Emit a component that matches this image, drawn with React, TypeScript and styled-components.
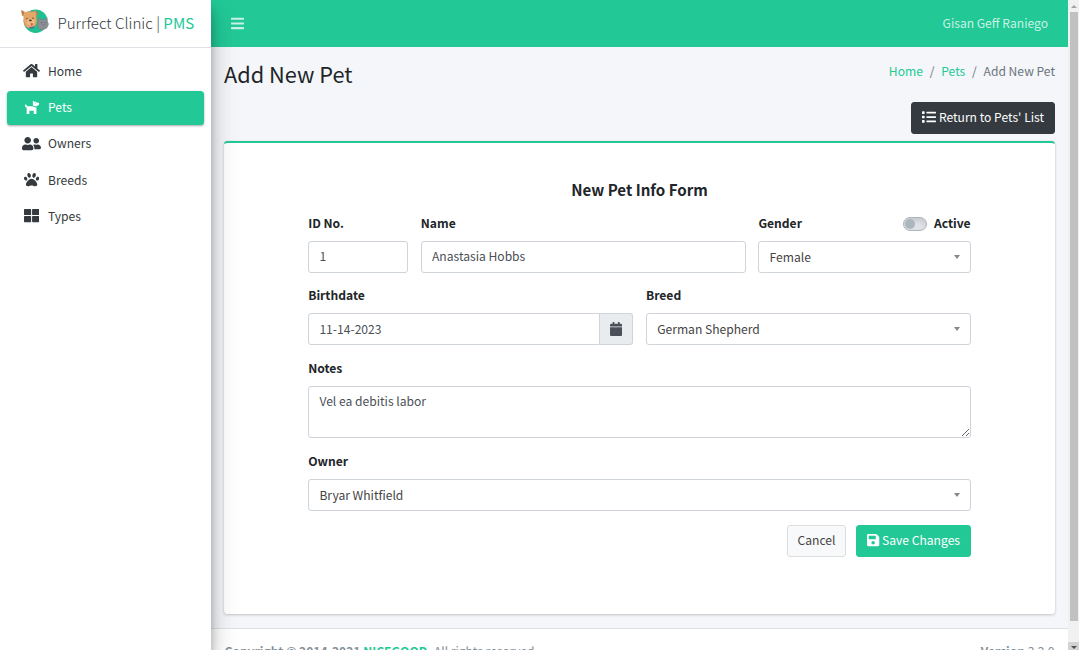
import React from "react";
import styled, { createGlobalStyle, css } from "styled-components";
import {
  FaBars, FaCalendar, FaDog, FaHome, FaList, FaPaw, FaSave, FaThLarge, FaUserFriends,
} from "react-icons/fa";

const GREEN = "#22c997";

const GlobalStyle = createGlobalStyle`
  *, *::before, *::after { box-sizing: border-box; }
  html, body { margin: 0; height: 650px; overflow: hidden; }
  body, input, textarea, button {
    font-family: "Noto Sans CJK SC", "Noto Sans", sans-serif;
    font-size: 12.1px;
    line-height: 20px;
    color: #212529;
  }
`;

const Page = styled.div`
  display: flex;
  height: 650px;
  overflow: hidden;
  background: #f4f6f9;
`;

const Sidebar = styled.aside`
  position: relative;
  z-index: 2;
  flex: none;
  width: 211px;
  background: #fff;
  box-shadow: 0 12.6px 25.2px rgba(0, 0, 0, 0.25), 0 9px 9px rgba(0, 0, 0, 0.22);
`;

const Brand = styled.div`
  display: flex;
  align-items: center;
  height: 48px;
  padding: 0 0 3px 20px;
  border-bottom: 1px solid #dee2e6;
`;

const BrandName = styled.span`
  margin-left: 7.4px;
  font-size: 15.15px;
  font-weight: 300;
  color: #343a40;
  white-space: pre;
`;

const Accent = styled.span`
  color: ${GREEN};
`;

const BrandAccent = styled(Accent)`
  font-weight: 400;
`;

const Icon = styled.span<{ $width: number; $height: number }>`
  flex: none;
  display: flex;
  svg {
    flex: none;
    width: ${(p) => p.$width}px;
    height: ${(p) => p.$height}px;
  }
`;

const Menu = styled.nav`
  display: flex;
  flex-direction: column;
  gap: 2.3px;
  padding: 6.4px 7px;
`;

const MenuItem = styled.a<{ $active?: boolean }>`
  display: flex;
  align-items: center;
  height: 34px;
  padding: 0 0 1px 13.6px;
  border-radius: 3.6px;
  color: #343a40;
  ${(p) =>
    p.$active &&
    css`
      background: ${GREEN};
      color: #fff;
      box-shadow: 0 1px 3px rgba(0, 0, 0, 0.12), 0 1px 2px rgba(0, 0, 0, 0.24);
    `}
`;

const MenuIcon = styled(Icon)`
  justify-content: center;
  width: 22px;
  margin-right: 5.4px;
`;

const Main = styled.div`
  flex: 1;
  min-width: 0;
  display: flex;
  flex-direction: column;
`;

const Navbar = styled.header`
  flex: none;
  display: flex;
  align-items: center;
  justify-content: space-between;
  height: 47px;
  padding: 0 20px 1px 19.5px;
  background: ${GREEN};
  color: rgba(255, 255, 255, 0.75);
`;

const Content = styled.main`
  flex: none;
  height: 581px;
  padding: 12px 13px 0;
`;

const TitleBar = styled.div`
  display: flex;
  justify-content: space-between;
  height: 43px;
`;

const Title = styled.h1`
  margin: 0;
  font-size: 21.75px;
  font-weight: 400;
  line-height: 30px;
`;

const Breadcrumb = styled.div`
  display: flex;
  gap: 6.8px;
  padding-top: 2px;
  color: #6c757d;
`;

const Actions = styled.div`
  display: flex;
  justify-content: flex-end;
  gap: 10px;
`;

const tones = {
  dark: css`background: #343a40; border-color: #343a40; color: #fff;`,
  light: css`background: #f8f9fa; border-color: #ddd; color: #444;`,
  primary: css`background: ${GREEN}; border-color: ${GREEN}; color: #fff;`,
};

const Button = styled.button<{ $tone: keyof typeof tones; $gap?: number }>`
  display: flex;
  align-items: center;
  gap: ${(p) => p.$gap ?? 3}px;
  height: 32px;
  padding: 0 10px 2px;
  border: 1px solid;
  border-radius: 3px;
  white-space: nowrap;
  ${(p) => tones[p.$tone]}
`;

const Card = styled.section`
  height: 473px;
  margin-top: 7px;
  padding: 35px 84px 0;
  border-top: 2px solid ${GREEN};
  border-radius: 3.6px;
  background: #fff;
  box-shadow: 0 0 1px rgba(0, 0, 0, 0.125), 0 1px 3px rgba(0, 0, 0, 0.2);
`;

const FormTitle = styled.h2`
  margin: 0 0 13px;
  font-size: 15.1px;
  line-height: 22px;
  font-weight: 700;
  text-align: center;
`;

const Row = styled.div<{ $columns: string; $gap?: number }>`
  display: grid;
  grid-template-columns: ${(p) => p.$columns};
  column-gap: 12.6px;
  margin-bottom: ${(p) => p.$gap ?? 12}px;
`;

const Field = styled.div`
  min-width: 0;
`;

const LabelLine = styled.div`
  display: flex;
  justify-content: space-between;
  height: 20px;
  margin-bottom: 8px;
  padding: 0 0.4px 0 0.2px;
`;

const Label = styled.label`
  display: flex;
  align-items: center;
  gap: 7px;
  font-weight: 700;
`;

const controlBox = css`
  display: block;
  width: 100%;
  height: 32px;
  border: 1px solid #ced4da;
  border-radius: 3px;
  background: #fff;
  color: #495057;
`;

const Input = styled.input`
  ${controlBox}
  padding: 0 10.4px 3px;
  outline: none;
`;

const InputGroup = styled.div`
  display: flex;
  ${Input} {
    border-radius: 3px 0 0 3px;
    padding-bottom: 1px;
  }
`;

const Addon = styled.span`
  flex: none;
  display: flex;
  align-items: center;
  justify-content: center;
  width: 33px;
  border: 1px solid #ced4da;
  border-left: 0;
  border-radius: 0 3px 3px 0;
  background: #e9ecef;
  color: #495057;
`;

const TextArea = styled.textarea`
  ${controlBox}
  height: 52px;
  padding: 4px 10.4px;
  outline: none;
  resize: vertical;
`;

const SelectBox = styled.div`
  ${controlBox}
  display: flex;
  align-items: center;
  justify-content: space-between;
  padding: 0 10px 0 10.4px;
  color: #444;
  &::after {
    content: "";
    border: 3.5px solid transparent;
    border-top: 4.5px solid #888;
    border-bottom: 0;
  }
`;

const Toggle = styled.span`
  display: flex;
  align-items: center;
  width: 24px;
  height: 14px;
  margin-top: 1px;
  padding: 0 1px;
  border: 1px solid #adb5bd;
  border-radius: 7px;
  background: #dee2e6;
  box-shadow: inset 0 3px 4px rgba(0, 0, 0, 0.1);
  &::before {
    content: "";
    width: 10px;
    height: 10px;
    border-radius: 50%;
    background: #adb5bd;
  }
`;

const Footer = styled.footer`
  flex: none;
  display: flex;
  justify-content: space-between;
  padding: 12px 13.5px;
  border-top: 1px solid #dee2e6;
  background: #fff;
  color: #869099;
  font-size: 12.05px;
`;

const ScrollTrack = styled.div`
  flex: none;
  display: flex;
  flex-direction: column;
  align-items: center;
  width: 11px;
  height: 650px;
  background: #f1f1f1;
`;

const ScrollThumb = styled.div`
  flex: none;
  width: 8px;
  height: 609px;
  margin-bottom: auto;
  background: #c1c1c1;
`;

const ScrollButton = styled.div<{ $down?: boolean }>`
  flex: none;
  display: flex;
  align-items: center;
  justify-content: center;
  width: 11px;
  height: ${(p) => (p.$down ? 8 : 12)}px;
  padding-top: ${(p) => (p.$down ? 2 : 0)}px;
  background: ${(p) => (p.$down ? "#d2d2d2" : "#f1f1f1")};
  &::before {
    content: "";
    border: 3px solid transparent;
    ${(p) =>
      p.$down
        ? "border-top-color: #505050; border-bottom: 0;"
        : "border-bottom-color: #a3a3a3; border-top: 0;"}
  }
`;

const Logo = () => (
  <svg width="30" height="28" viewBox="0 0 30 28">
    <circle cx="15.6" cy="13.2" r="11.8" fill="#20bf91" />
    <path d="M18.2 13.6l.6-4 2.4 2 3.2-.2 2.7-1.9.3 4 1.2 2.6-1.6 3.8-3.4 1.5-3.8.1-2.3-3z" fill="#8b8f93" stroke="#6c7276" strokeWidth=".4" />
    <path d="M1.4 2.2l4.2 2.2 2.4-.8 4.4.1 3.6-.9 1.6 3-1.4 2.2.8 5.2-1.2 4-3.2 2.6-4.4.4-3.4-2.8-1.2-4.4.4-4.4-1.8-1z" fill="#e3a869" stroke="#b98450" strokeWidth=".4" />
    <path d="M1.5 2.5l2.6 1.6-.8 3.4-1.1-.6zM15.4 3.4l1.7-.2.6 2.8-1.2 1.6z" fill="#b57c4c" />
    <ellipse cx="10.8" cy="14" rx="3.8" ry="3.2" fill="#edbd82" />
    <circle cx="7" cy="10.6" r=".7" fill="#49362c" />
    <circle cx="13" cy="10.2" r=".7" fill="#49362c" />
    <ellipse cx="10.4" cy="12.4" rx="1.4" ry=".9" fill="#49362c" />
    <path d="M10.6 15.2l2.2-.3-.3 2.6-1.4.3z" fill="#db5362" />
    <path d="M8.8 19.4l5.6-.8-.6 1.5-4.2.5z" fill="#4663a4" />
    <circle cx="21.6" cy="14.8" r=".5" fill="#41484c" />
    <circle cx="25.2" cy="14.4" r=".5" fill="#41484c" />
    <path d="M22 17.2l1.7-.5 1.6.3" fill="none" stroke="#62696c" strokeWidth=".5" />
  </svg>
);

const menu = [
  { label: "Home", icon: <FaHome />, width: 17, height: 15.1 },
  { label: "Pets", icon: <FaDog />, width: 16, height: 14.2 },
  { label: "Owners", icon: <FaUserFriends />, width: 19, height: 15.2 },
  { label: "Breeds", icon: <FaPaw />, width: 15.2, height: 15.2 },
  { label: "Types", icon: <FaThLarge />, width: 15.2, height: 15.2 },
];

export default function App() {
  return (
    <>
      <GlobalStyle />
      <Page>
        <Sidebar>
          <Brand>
            <Logo />
            <BrandName>Purrfect Clinic | <BrandAccent>PMS</BrandAccent></BrandName>
          </Brand>
          <Menu>
            {menu.map((m) => (
              <MenuItem key={m.label} $active={m.label === "Pets"}>
                <MenuIcon $width={m.width} $height={m.height}>{m.icon}</MenuIcon>
                {m.label}
              </MenuItem>
            ))}
          </Menu>
        </Sidebar>
        <Main>
          <Navbar>
            <Icon $width={13} $height={14.9}><FaBars /></Icon>
            <span>Gisan Geff Raniego</span>
          </Navbar>
          <Content>
            <TitleBar>
              <Title>Add New Pet</Title>
              <Breadcrumb>
                <Accent>Home</Accent><span>/</span><Accent>Pets</Accent><span>/</span><span>Add New Pet</span>
              </Breadcrumb>
            </TitleBar>
            <Actions>
              <Button $tone="dark"><Icon $width={14} $height={14}><FaList /></Icon>Return to Pets' List</Button>
            </Actions>
            <Card>
              <FormTitle>New Pet Info Form</FormTitle>
              <Row $columns="100px 325px 1fr">
                <Field>
                  <LabelLine><Label>ID No.</Label></LabelLine>
                  <Input defaultValue="1" />
                </Field>
                <Field>
                  <LabelLine><Label>Name</Label></LabelLine>
                  <Input defaultValue="Anastasia Hobbs" />
                </Field>
                <Field>
                  <LabelLine>
                    <Label>Gender</Label>
                    <Label><Toggle />Active</Label>
                  </LabelLine>
                  <SelectBox>Female</SelectBox>
                </Field>
              </Row>
              <Row $columns="1fr 1fr" $gap={13}>
                <Field>
                  <LabelLine><Label>Birthdate</Label></LabelLine>
                  <InputGroup>
                    <Input defaultValue="11-14-2023" />
                    <Addon><Icon $width={12.3} $height={14}><FaCalendar /></Icon></Addon>
                  </InputGroup>
                </Field>
                <Field>
                  <LabelLine><Label>Breed</Label></LabelLine>
                  <SelectBox>German Shepherd</SelectBox>
                </Field>
              </Row>
              <Row $columns="1fr" $gap={13}>
                <Field>
                  <LabelLine><Label>Notes</Label></LabelLine>
                  <TextArea defaultValue="Vel ea debitis labor" />
                </Field>
              </Row>
              <Row $columns="1fr" $gap={14}>
                <Field>
                  <LabelLine><Label>Owner</Label></LabelLine>
                  <SelectBox>Bryar Whitfield</SelectBox>
                </Field>
              </Row>
              <Actions>
                <Button $tone="light">Cancel</Button>
                <Button $tone="primary" $gap={2.3}><Icon $width={12.3} $height={14}><FaSave /></Icon>Save Changes</Button>
              </Actions>
            </Card>
          </Content>
          <Footer>
            <span><b>Copyright © 2014-2021 <Accent>NICEGOOD</Accent>.</b> All rights reserved.</span>
            <span><b>Version</b> 3.2.0</span>
          </Footer>
        </Main>
        <ScrollTrack>
          <ScrollButton />
          <ScrollThumb />
          <ScrollButton $down />
        </ScrollTrack>
      </Page>
    </>
  );
}
